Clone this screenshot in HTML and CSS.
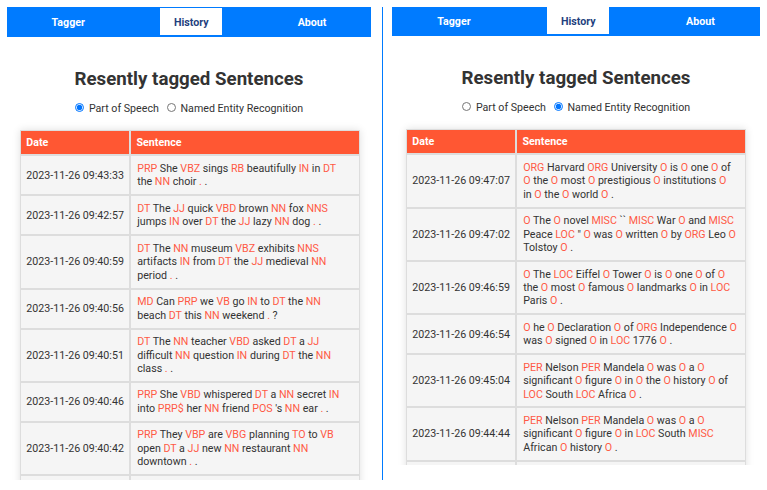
FILE: index.html
```html
<!DOCTYPE html>
<html lang="en">
<head>
<meta charset="utf-8">
<title>Tagger History</title>
<link rel="stylesheet" href="styles.css">
</head>
<body>
<div class="shot shot-left">
  <nav class="nav">
    <a class="nav-link">Tagger</a>
    <a class="nav-link active">History</a>
    <a class="nav-link">About</a>
  </nav>
  <h1 class="title">Resently tagged Sentences</h1>
  <div class="radios">
    <label class="radio"><input type="radio" name="m1" checked>Part of Speech</label>
    <label class="radio"><input type="radio" name="m1">Named Entity Recognition</label>
  </div>
  <table class="history">
    <thead><tr><th>Date</th><th>Sentence</th></tr></thead>
    <tbody>
      <tr><td class="date">2023-11-26 09:43:33</td><td class="sent"><span class="t">PRP</span> She <span class="t">VBZ</span> sings <span class="t">RB</span> beautifully <span class="t">IN</span> in <span class="t">DT</span> the&nbsp;<span class="t">NN</span> choir <span class="t">.</span> .</td></tr>
      <tr><td class="date">2023-11-26 09:42:57</td><td class="sent"><span class="t">DT</span> The <span class="t">JJ</span> quick <span class="t">VBD</span> brown <span class="t">NN</span> fox <span class="t">NNS</span> jumps <span class="t">IN</span> over <span class="t">DT</span> the <span class="t">JJ</span> lazy <span class="t">NN</span> dog <span class="t">.</span> .</td></tr>
      <tr><td class="date">2023-11-26 09:40:59</td><td class="sent"><span class="t">DT</span> The <span class="t">NN</span> museum <span class="t">VBZ</span> exhibits <span class="t">NNS</span> artifacts <span class="t">IN</span> from <span class="t">DT</span> the <span class="t">JJ</span> medieval <span class="t">NN</span> period <span class="t">.</span> .</td></tr>
      <tr><td class="date">2023-11-26 09:40:56</td><td class="sent"><span class="t">MD</span> Can <span class="t">PRP</span> we <span class="t">VB</span> go <span class="t">IN</span> to <span class="t">DT</span> the <span class="t">NN</span> beach&nbsp;<span class="t">DT</span> this <span class="t">NN</span> weekend <span class="t">.</span> ?</td></tr>
      <tr><td class="date">2023-11-26 09:40:51</td><td class="sent"><span class="t">DT</span> The <span class="t">NN</span> teacher <span class="t">VBD</span> asked <span class="t">DT</span> a <span class="t">JJ</span> difficult <span class="t">NN</span> question <span class="t">IN</span> during <span class="t">DT</span> the <span class="t">NN</span> class <span class="t">.</span> .</td></tr>
      <tr><td class="date">2023-11-26 09:40:46</td><td class="sent"><span class="t">PRP</span> She <span class="t">VBD</span> whispered <span class="t">DT</span> a <span class="t">NN</span> secret <span class="t">IN</span> into <span class="t">PRP$</span> her <span class="t">NN</span> friend <span class="t">POS</span> 's <span class="t">NN</span> ear <span class="t">.</span> .</td></tr>
      <tr><td class="date">2023-11-26 09:40:42</td><td class="sent"><span class="t">PRP</span> They <span class="t">VBP</span> are <span class="t">VBG</span> planning <span class="t">TO</span> to <span class="t">VB</span> open <span class="t">DT</span> a <span class="t">JJ</span> new <span class="t">NN</span> restaurant <span class="t">NN</span> downtown <span class="t">.</span> .</td></tr>
      <tr><td class="date">2023-11-26 09:40:37</td><td class="sent"><span class="t">DT</span> The <span class="t">NN</span> cat <span class="t">VBD</span> slept <span class="t">IN</span> on <span class="t">DT</span> the <span class="t">NN</span> sofa <span class="t">.</span> .</td></tr>
    </tbody>
  </table>
</div>
<div class="divider"></div>
<div class="shot shot-right">
  <nav class="nav nav-right">
    <a class="nav-link">Tagger</a>
    <a class="nav-link active">History</a>
    <a class="nav-link">About</a>
  </nav>
  <h1 class="title">Resently tagged Sentences</h1>
  <div class="radios">
    <label class="radio"><input type="radio" name="m2">Part of Speech</label>
    <label class="radio"><input type="radio" name="m2" checked>Named Entity Recognition</label>
  </div>
  <table class="history history-right">
    <thead><tr><th>Date</th><th>Sentence</th></tr></thead>
    <tbody>
      <tr><td class="date">2023-11-26 09:47:07</td><td class="sent"><span class="t">ORG</span> Harvard <span class="t">ORG</span> University <span class="t">O</span> is <span class="t">O</span> one <span class="t">O</span> of <span class="t">O</span> the <span class="t">O</span> most <span class="t">O</span> prestigious <span class="t">O</span> institutions <span class="t">O</span> in&nbsp;<span class="t">O</span> the <span class="t">O</span> world <span class="t">O</span> .</td></tr>
      <tr><td class="date">2023-11-26 09:47:02</td><td class="sent"><span class="t">O</span> The <span class="t">O</span> novel <span class="t">MISC</span> `` <span class="t">MISC</span> War <span class="t">O</span> and <span class="t">MISC</span> Peace <span class="t">LOC</span> " <span class="t">O</span> was <span class="t">O</span> written <span class="t">O</span> by <span class="t">ORG</span> Leo <span class="t">O</span> Tolstoy <span class="t">O</span> .</td></tr>
      <tr><td class="date">2023-11-26 09:46:59</td><td class="sent"><span class="t">O</span> The <span class="t">LOC</span> Eiffel <span class="t">O</span> Tower <span class="t">O</span> is <span class="t">O</span> one <span class="t">O</span> of <span class="t">O</span> the <span class="t">O</span> most <span class="t">O</span> famous <span class="t">O</span> landmarks <span class="t">O</span> in <span class="t">LOC</span> Paris <span class="t">O</span> .</td></tr>
      <tr><td class="date">2023-11-26 09:46:54</td><td class="sent"><span class="t">O</span> he <span class="t">O</span> Declaration <span class="t">O</span> of <span class="t">ORG</span> Independence <span class="t">O</span> was <span class="t">O</span> signed <span class="t">O</span> in <span class="t">LOC</span> 1776 <span class="t">O</span> .</td></tr>
      <tr><td class="date">2023-11-26 09:45:04</td><td class="sent"><span class="t">PER</span> Nelson <span class="t">PER</span> Mandela <span class="t">O</span> was <span class="t">O</span> a <span class="t">O</span> significant <span class="t">O</span> figure <span class="t">O</span> in <span class="t">O</span> the <span class="t">O</span> history <span class="t">O</span> of <span class="t">LOC</span> South <span class="t">LOC</span> Africa <span class="t">O</span> .</td></tr>
      <tr><td class="date">2023-11-26 09:44:44</td><td class="sent"><span class="t">PER</span> Nelson <span class="t">PER</span> Mandela <span class="t">O</span> was <span class="t">O</span> a <span class="t">O</span> significant <span class="t">O</span> figure <span class="t">O</span> in <span class="t">LOC</span> South <span class="t">MISC</span> African <span class="t">O</span> history <span class="t">O</span> .</td></tr>
      <tr><td class="date">2023-11-26 09:44:30</td><td class="sent"><span class="t">PER</span> Albert <span class="t">PER</span> Einstein <span class="t">O</span> was <span class="t">O</span> born <span class="t">O</span> in <span class="t">LOC</span> Ulm <span class="t">O</span> .</td></tr>
    </tbody>
  </table>
</div>
</body>
</html>
```

FILE: styles.css
```css
html, body {
  background: #ffffff;
}

body {
  margin: 0;
  padding-top: 7px;
  display: flex;
  align-items: flex-start;
  font-family: Roboto, "Noto Sans", "Liberation Sans", sans-serif;
  color: #333333;
}

.shot {
  overflow: hidden;
  flex: none;
}

.shot-left {
  margin-left: 7px;
  width: 364px;
  height: 473px;
}

.shot-right {
  margin-left: 9px;
  width: 368px;
  height: 458px;
}

.divider {
  flex: none;
  margin-left: 11px;
  width: 1px;
  height: 473px;
  background: #007bff;
}

.nav {
  display: flex;
  justify-content: space-around;
  align-items: flex-start;
  height: 30px;
  padding-top: 1px;
  box-sizing: border-box;
  background: #007bff;
}

.nav-right {
  height: 29px;
  padding-top: 0;
}

.nav-link {
  display: block;
  height: 27px;
  box-sizing: border-box;
  padding: 9px 13.5px 0;
  font-size: 10.67px;
  line-height: 12.5px;
  font-weight: 700;
  color: #ffffff;
}

.nav-link.active {
  background: #ffffff;
  color: #1f3f7e;
}

.nav-right .nav-link {
  padding-top: 8.5px;
}

.title {
  margin: 29.6px 0 0;
  font-size: 18.7px;
  line-height: 24px;
  font-weight: 700;
  text-align: center;
  color: #333333;
}

.radios {
  margin-top: 11.4px;
  text-align: center;
  font-size: 10.67px;
  line-height: 13.33px;
  color: #333333;
}

.radio {
  display: inline;
  margin: 0 2.5px;
}

.radio input {
  width: 9px;
  height: 9px;
  margin: 0 5px 0 0;
  vertical-align: -0.5px;
}

.history {
  margin: 14.7px 0 0 13px;
  width: 340px;
  border-collapse: separate;
  border-spacing: 0;
  box-shadow: 0 0 8px rgba(0, 0, 0, 0.12);
  font-size: 10.67px;
  line-height: 13.33px;
}

.history-right {
  margin-left: 14px;
}

.history th {
  padding: 5px 5.33px;
  text-align: left;
  font-weight: 700;
  color: #ffffff;
  background: #ff5733;
  border: 1px solid #dddddd;
}

.history td {
  padding: 5.67px 5.33px;
  background: #f5f5f5;
  border: 1px solid #dddddd;
  color: #333333;
  vertical-align: middle;
}

.history td.date {
  white-space: nowrap;
}

.history td.sent {
  padding-left: 6px;
  padding-right: 4.8px;
}

.t {
  color: #ff5a45;
}
```
